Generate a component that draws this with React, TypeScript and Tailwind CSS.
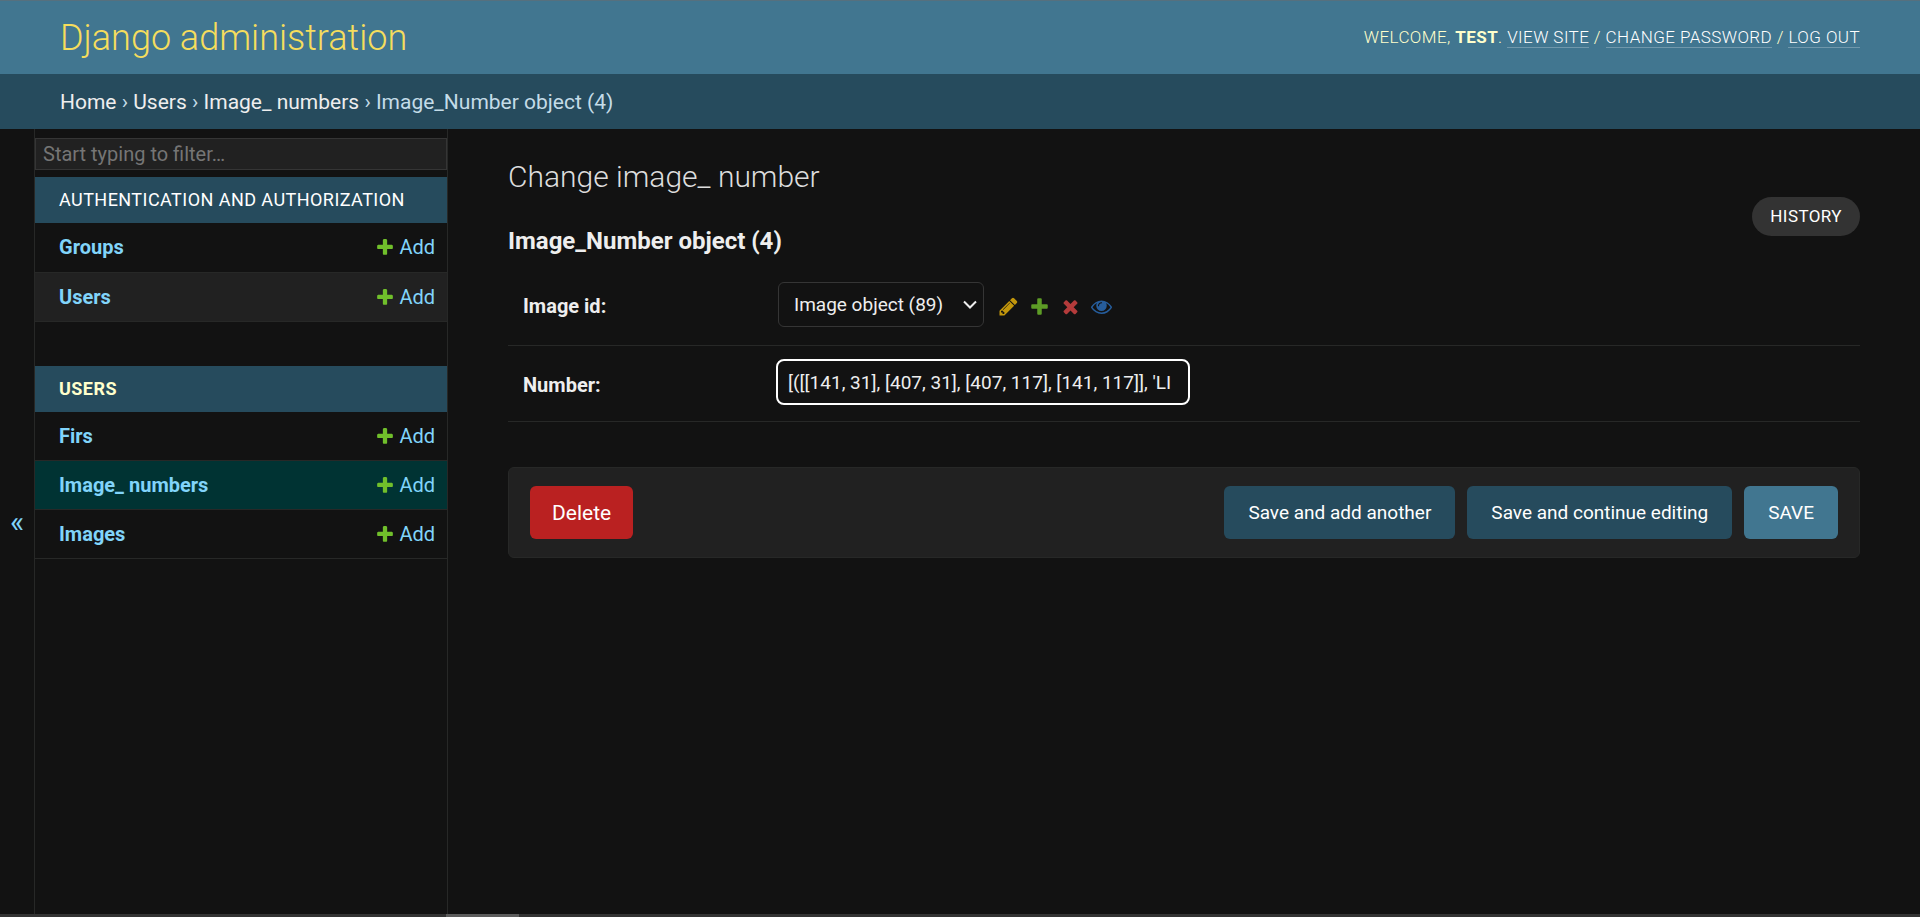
import React from "react";

const PLUS =
  "M1600 796v192q0 40-28 68t-68 28h-416v416q0 40-28 68t-68 28h-192q-40 0-68-28t-28-68v-416h-416q-40 0-68-28t-28-68v-192q0-40 28-68t68-28h416v-416q0-40 28-68t68-28h192q40 0 68 28t28 68v416h416q40 0 68 28t28 68z";
const PENCIL =
  "M491 1536l91-91-235-235-91 91v107h128v128h107zm523-928q0-22-22-22-10 0-17 7l-542 542q-7 7-7 17 0 22 22 22 10 0 17-7l542-542q7-7 7-17zm-54-192l416 416-832 832h-416v-416zm683 96q0 53-37 90l-166 166-416-416 166-165q36-38 90-38 53 0 91 38l235 234q37 39 37 91z";
const CROSS =
  "M1490 1322q0 40-28 68l-136 136q-28 28-68 28t-68-28l-294-294-294 294q-28 28-68 28t-68-28l-136-136q-28-28-28-68t28-68l294-294-294-294q-28-28-28-68t28-68l136-136q28-28 68-28t68 28l294 294 294-294q28-28 68-28t68 28l136 136q28 28 28 68t-28 68l-294 294 294 294q28 28 28 68z";
const EYE =
  "M1664 960q-152-236-381-353 61 104 61 225 0 185-131.5 316.5t-316.5 131.5-316.5-131.5-131.5-316.5q0-121 61-225-229 117-381 353 133 205 333.5 326.5t434.5 121.5 434.5-121.5 333.5-326.5zm-720-384q0-20-14-34t-34-14q-125 0-214.5 89.5t-89.5 214.5q0 20 14 34t34 14 34-14 14-34q0-86 61-147t147-61q20 0 34-14t14-34zm848 384q0 34-20 69-140 230-376.5 368.5t-499.5 138.5-499.5-139-376.5-368q-20-35-20-69t20-69q140-229 376.5-368t499.5-139 499.5 139 376.5 368q20 35 20 69z";

function Icon({ path, className }: { path: string; className: string }) {
  return (
    <svg viewBox="0 0 1792 1792" className={`shrink-0 fill-current ${className}`} aria-hidden="true">
      <path d={path} />
    </svg>
  );
}

type Model = { name: string; row: string };

function AppModule({ title, current, models }: { title: string; current?: boolean; models: Model[] }) {
  return (
    <table className="mb-11 w-full border-collapse">
      <caption
        className={`h-[46px] bg-[#264b5d] px-6 text-left align-middle text-lg leading-[46px] tracking-wide uppercase ${
          current ? "font-bold text-[#ffffcc]" : "font-normal text-white"
        }`}
      >
        <a href="#">{title}</a>
      </caption>
      <tbody>
        {models.map((m) => (
          <tr key={m.name} className={`h-[49px] border-b border-[#272827] ${m.row}`}>
            <th scope="row" className="pl-6 text-left font-bold text-[#81d4fa]">
              <a href="#">{m.name}</a>
            </th>
            <td className="pr-3 text-[#81d4fa]">
              <a href="#" className="flex items-center justify-end gap-1">
                <Icon path={PLUS} className="size-5 text-[#70bf2b]" />
                Add
              </a>
            </td>
          </tr>
        ))}
      </tbody>
    </table>
  );
}

const toolLink = "border-b border-white/25 text-white";
const button = "h-[53px] rounded-md px-6 text-[19px] text-white";

export default function App() {
  return (
    <div className="flex min-h-screen flex-col bg-[#121212] font-[Roboto,sans-serif] text-[20px] leading-6 text-[#eeeeee]">
      <header className="flex h-[74px] items-center justify-between border-t border-[#56707e] bg-[#417690] px-[60px] text-[#ffffcc]">
        <h1 className="text-4xl font-light text-[#f5dd5d]">
          <a href="#">Django administration</a>
        </h1>
        <div className="pb-0.5 text-[17px] leading-5 font-light tracking-wide uppercase">
          Welcome, <strong className="font-bold">test</strong>. <a href="#" className={toolLink}>View site</a> /{" "}
          <a href="#" className={toolLink}>Change password</a> / <a href="#" className={toolLink}>Log out</a>
        </div>
      </header>

      <nav aria-label="Breadcrumbs" className="flex h-[55px] items-center bg-[#264b5d] px-[60px] text-[21px] whitespace-pre text-[#c4dce8]">
        <a href="#" className="text-[#eeeeee]">Home</a> › <a href="#" className="text-[#eeeeee]">Users</a> ›{" "}
        <a href="#" className="text-[#eeeeee]">Image_ numbers</a> › Image_Number object (4)
      </nav>

      <div className="flex grow">
        <button
          aria-label="Toggle navigation"
          className="flex w-[35px] shrink-0 items-center justify-center border-r border-[#272827] text-[30px] text-[#81d4fa]"
        >
          «
        </button>
        <aside className="w-[413px] shrink-0 border-r border-[#272827] pt-[9px]">
          <input
            type="search"
            aria-label="Filter navigation items"
            placeholder="Start typing to filter…"
            className="mb-[7px] block h-8 w-full border border-[#353535] bg-[#212121] px-[7px] placeholder:text-[#757575]"
          />
          <AppModule
            title="Authentication and Authorization"
            models={[
              { name: "Groups", row: "" },
              { name: "Users", row: "bg-[#212121]" },
            ]}
          />
          <AppModule
            title="Users"
            current
            models={[
              { name: "Firs", row: "" },
              { name: "Image_ numbers", row: "bg-[#003333]" },
              { name: "Images", row: "" },
            ]}
          />
        </aside>

        <main className="grow px-[60px] pt-[30px]">
          <h1 className="text-3xl font-light text-[#dddddd]">Change image_ number</h1>
          <div className="flex items-start justify-between pt-0.5">
            <h2 className="pt-7 text-2xl font-bold">Image_Number object (4)</h2>
            <a href="#" className="flex h-[39px] items-center rounded-full bg-[#333333] px-[18px] pb-0.5 text-[17px] font-normal tracking-wide text-white uppercase">
              History
            </a>
          </div>

          <form>
            <div className="mt-2.5 flex items-start border-b border-[#272827] px-[15px] pt-[15px] pb-[18px]">
              <label htmlFor="image-id" className="w-[255px] pt-3 font-bold">Image id:</label>
              <div className="grid items-center">
                <select
                  id="image-id"
                  className="col-start-1 row-start-1 h-[45px] appearance-none rounded-md border border-[#353535] bg-[#121212] pr-[39px] pl-[15px] text-[19px]"
                >
                  <option>Image object (89)</option>
                </select>
                <svg viewBox="0 0 14 9" className="pointer-events-none col-start-1 row-start-1 mr-[7px] h-[9px] w-[14px] justify-self-end" aria-hidden="true">
                  <path d="M1 1.5 7 7.5 13 1.5" fill="none" stroke="#eeeeee" strokeWidth="2" />
                </svg>
              </div>
              <div className="ml-3.5 flex items-center gap-2.5 self-center pt-[3px] opacity-80">
                <a href="#" aria-label="Change selected"><Icon path={PENCIL} className="size-[21px] text-[#efb80b]" /></a>
                <a href="#" aria-label="Add another"><Icon path={PLUS} className="size-[21px] text-[#70bf2b]" /></a>
                <a href="#" aria-label="Delete selected"><Icon path={CROSS} className="size-[21px] text-[#dd4646]" /></a>
                <a href="#" aria-label="View selected"><Icon path={EYE} className="size-[21px] text-[#2b70bf]" /></a>
              </div>
            </div>
            <div className="flex items-start border-b border-[#272827] px-[15px] pt-[15px] pb-[18px]">
              <label htmlFor="number" className="w-[255px] pt-3 font-bold">Number:</label>
              <input
                id="number"
                type="text"
                defaultValue="[([[141, 31], [407, 31], [407, 117], [141, 117]], 'LI"
                className="h-[42px] w-[410px] rounded-md bg-[#121212] px-[10px] text-[19px] outline-2 outline-white"
              />
            </div>

            <div className="mt-[45px] flex items-center gap-3 rounded-md border border-[#272827] bg-[#212121] px-[21px] py-[18px]">
              <a href="#" className="mr-auto flex h-[53px] items-center rounded-md bg-[#ba2121] px-[22px] text-[21px] text-white">Delete</a>
              <button type="button" className={`${button} bg-[#264b5d]`}>Save and add another</button>
              <button type="button" className={`${button} bg-[#264b5d]`}>Save and continue editing</button>
              <button type="button" className={`${button} bg-[#417690]`}>SAVE</button>
            </div>
          </form>
        </main>
      </div>

      <div className="flex h-[3px] bg-[#333333]">
        <div className="ml-[446px] w-[73px] bg-[#5c5c5c]" />
      </div>
    </div>
  );
}
